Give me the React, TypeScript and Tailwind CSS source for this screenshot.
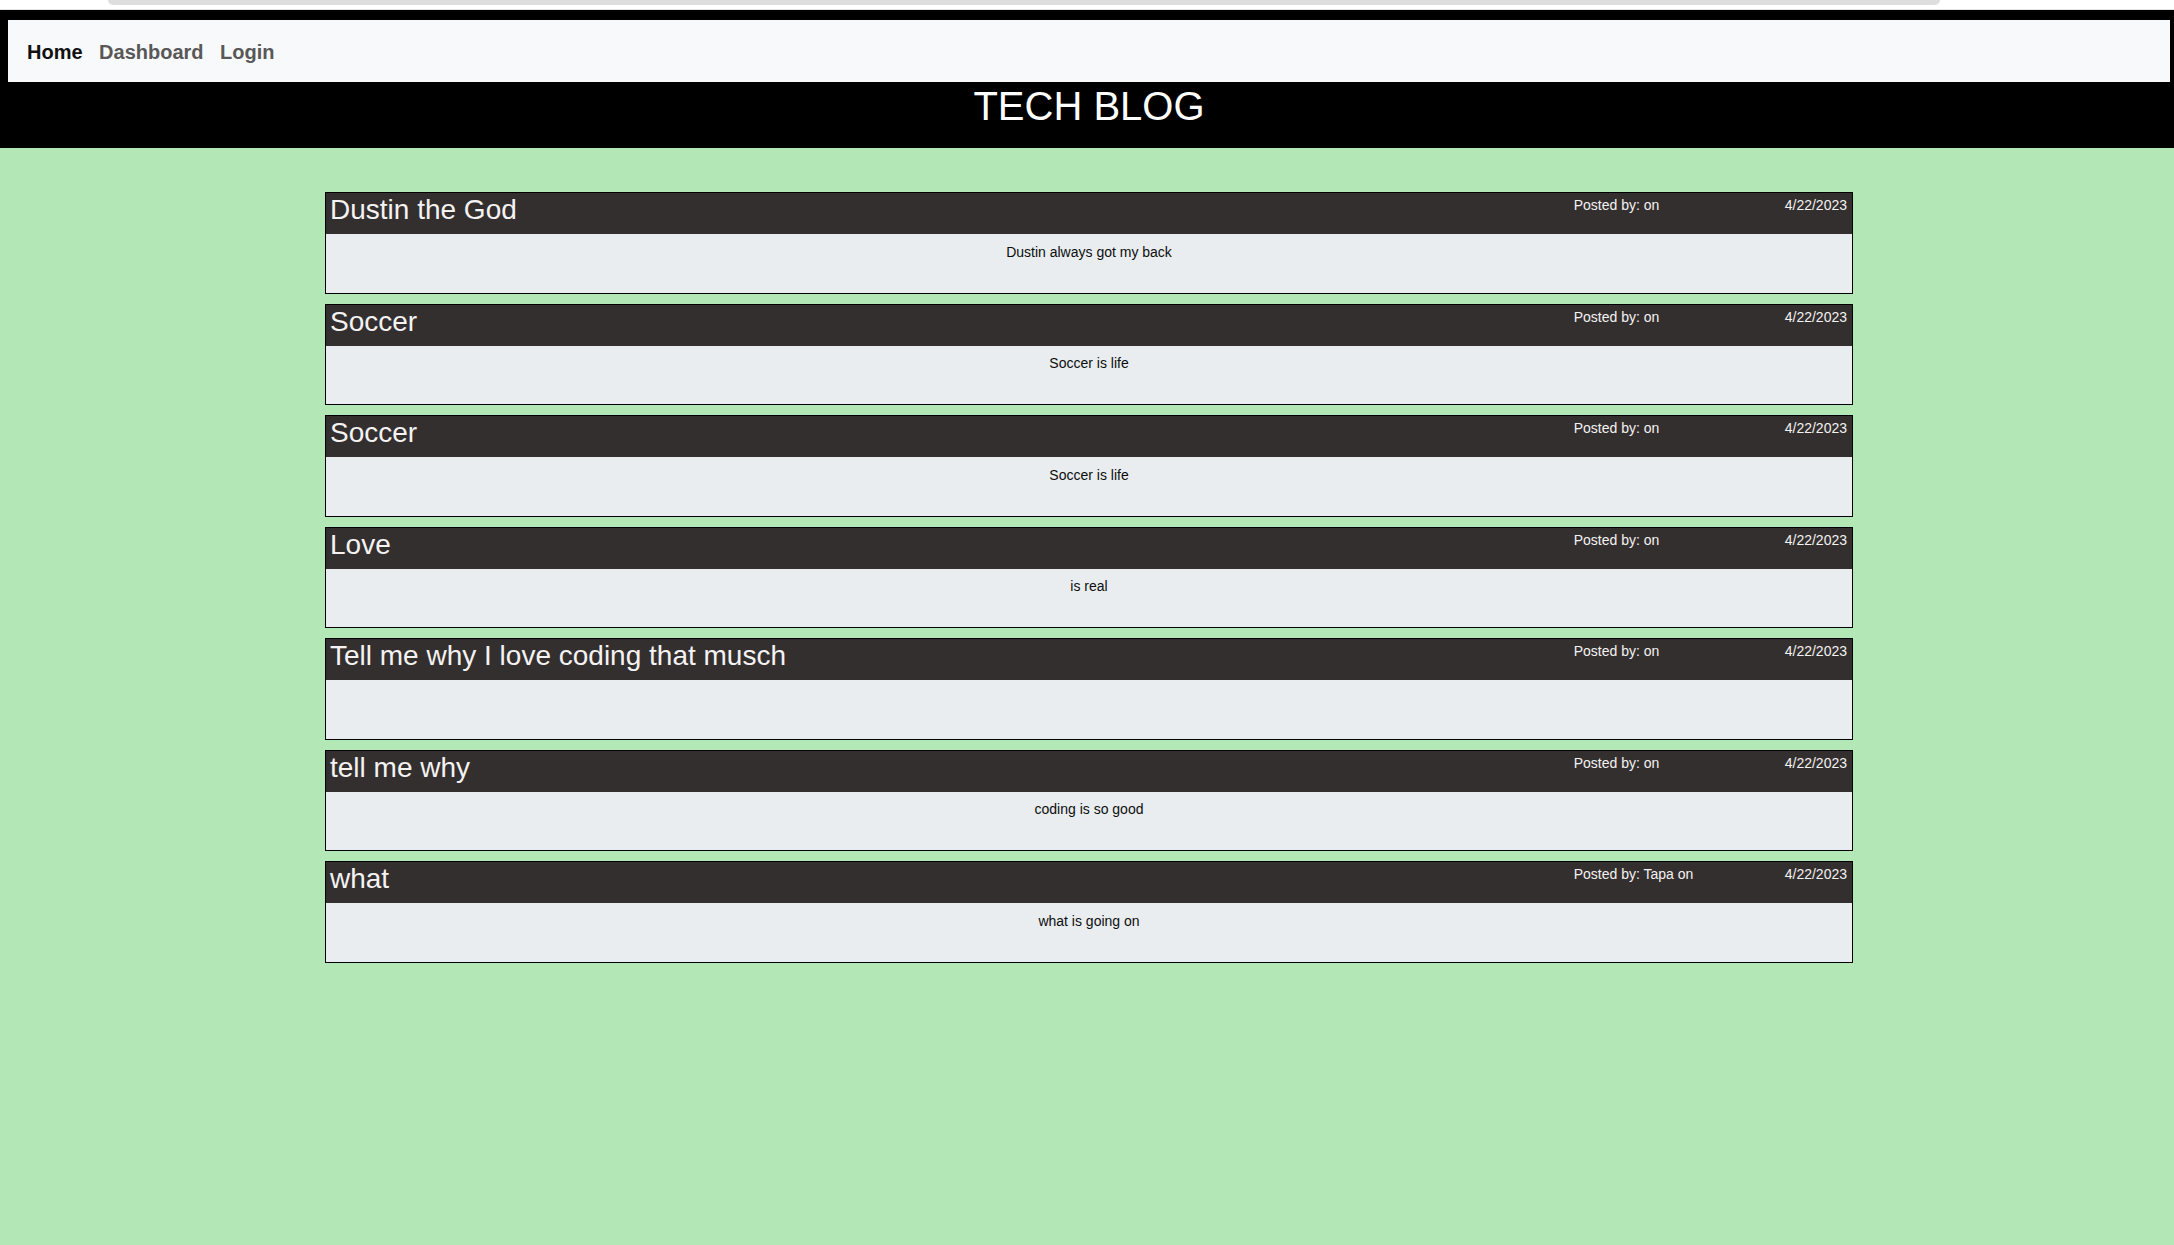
type Post = {
  title: string;
  author: string;
  date: string;
  body: string;
};

const posts: Post[] = [
  { title: "Dustin the God", author: "", date: "4/22/2023", body: "Dustin always got my back" },
  { title: "Soccer", author: "", date: "4/22/2023", body: "Soccer is life" },
  { title: "Soccer", author: "", date: "4/22/2023", body: "Soccer is life" },
  { title: "Love", author: "", date: "4/22/2023", body: "is real" },
  { title: "Tell me why I love coding that musch", author: "", date: "4/22/2023", body: "" },
  { title: "tell me why", author: "", date: "4/22/2023", body: "coding is so good" },
  { title: "what", author: "Tapa", date: "4/22/2023", body: "what is going on" },
];

function PostCard({ post }: { post: Post }) {
  return (
    <div className="border border-black">
      {/* cabeçalho do post */}
      <div className="h-[41px] bg-[#332f2e] text-[#f4f2f2] flex items-start">
        <h3 className="flex-1 pl-[4px] pt-[1px] text-[28px] leading-[32px] font-normal">
          {post.title}
        </h3>
        <span className="w-[211px] pt-[4px] text-[14px] leading-[16px]">
          Posted by: {post.author ? `${post.author} ` : ""}on
        </span>
        <span className="pr-[5px] pt-[4px] text-[14px] leading-[16px]">{post.date}</span>
      </div>
      <div className="h-[58.5px] bg-[#e9edf0] pt-[9.5px] text-center text-[14px] leading-[16px] text-[#0d0d0d]">
        {post.body}
      </div>
    </div>
  );
}

export default function App() {
  return (
    <div className="min-h-screen bg-[#b3e8b6] font-['Liberation_Sans',Arial,sans-serif]">
      {/* resto da barra do navegador */}
      <div className="h-[10px] bg-white border-b border-[#e4e4e4]">
        <div className="ml-[108px] w-[1832px] h-[5px] bg-[#dedede] rounded-b-[10px]"></div>
      </div>

      <header className="bg-black pt-[10px] pb-[18px]">
        <nav className="ml-[8px] mr-[4px] h-[62px] bg-[#f8f9fa] flex items-center pt-[2px] pl-[19px] gap-[16.5px] text-[20px] font-bold">
          <a className="text-[#111]">Home</a>
          <a className="text-[#585858]">Dashboard</a>
          <a className="text-[#585858]">Login</a>
        </nav>
        <h1 className="pl-[4px] text-center text-white text-[40px] leading-[48px] font-normal">
          TECH BLOG
        </h1>
      </header>

      <main className="pl-[4px] pt-[44px]">
        <div className="mx-auto w-[1528px] flex flex-col gap-[10px]">
          {posts.map((p, i) => (
            <PostCard key={i} post={p} />
          ))}
        </div>
      </main>
    </div>
  );
}
